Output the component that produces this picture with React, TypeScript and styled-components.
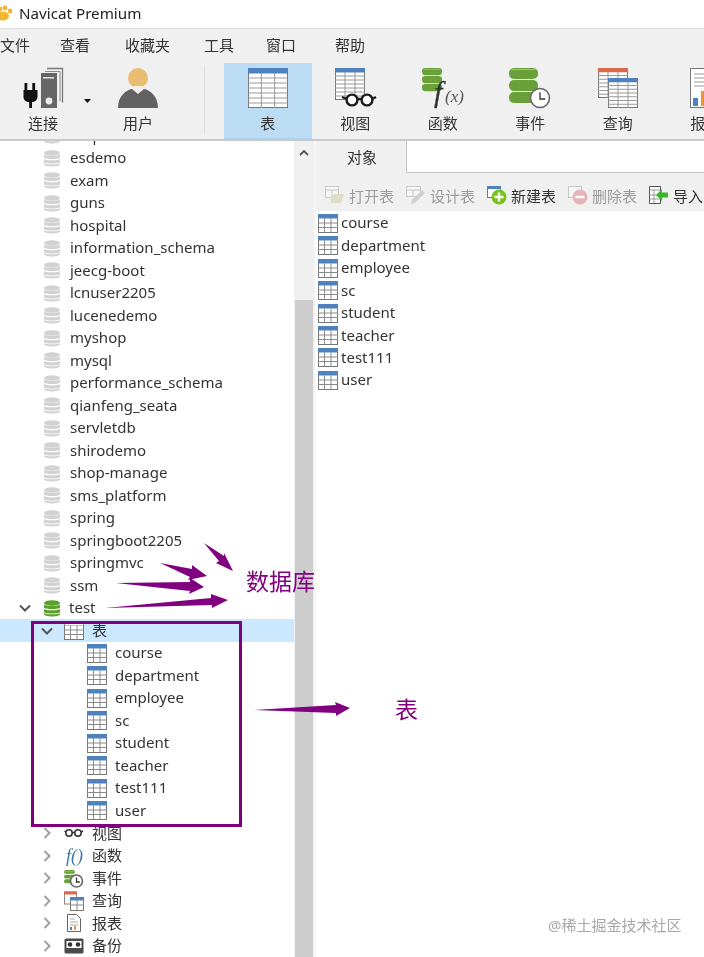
import React from "react";
import styled, { createGlobalStyle } from "styled-components";

const Global = createGlobalStyle`
  html, body { margin: 0; padding: 0; background: #fff; }
  body { font-family: "Noto Sans", "Noto Sans CJK SC", sans-serif; color: #303030; }
  * { box-sizing: border-box; }
`;

const Page = styled.div`
  position: relative;
  width: 704px;
  height: 957px;
  overflow: hidden;
  display: flex;
  flex-direction: column;
  background: #fff;
  filter: blur(0.35px);
`;
const TitleBar = styled.div`
  height: 28px;
  flex: none;
  display: flex;
  align-items: center;
  gap: 7px;
  padding-bottom: 2px;
  background: #fff;
  font-size: 15.2px;
  color: #222;
`;
const MenuBar = styled.div`
  height: 32px;
  flex: none;
  display: flex;
  align-items: center;
  background: #f0f0f0;
  border-top: 1px solid #dcdcdc;
  font-size: 15px;
  color: #333;
`;
const MenuItem = styled.span<{ $gap: number }>`
  margin-left: ${(p) => p.$gap}px;
  white-space: nowrap;
`;
const ToolBar = styled.div`
  height: 81px;
  flex: none;
  display: flex;
  background: #f0f0f0;
  border-bottom: 2px solid #c9c9c9;
  overflow: hidden;
`;
const ToolButton = styled.div<{ $w: number; $active?: boolean }>`
  flex: none;
  width: ${(p) => p.$w}px;
  height: 76px;
  margin-top: 3px;
  padding-top: 4px;
  display: flex;
  flex-direction: column;
  align-items: center;
  background: ${(p) => (p.$active ? "#bcdcf4" : "transparent")};
  box-shadow: ${(p) => (p.$active ? "inset 0 -1px 0 #a8d0ee" : "none")};
`;
const ToolIcon = styled.svg`
  flex: none;
  display: block;
  width: 88px;
  height: 42px;
  overflow: visible;
`;
const ToolLabel = styled.span`
  margin-top: 4px;
  font-size: 15px;
  line-height: 20px;
  color: #333;
  white-space: nowrap;
`;
const Separator = styled.div`
  flex: none;
  width: 1px;
  height: 70px;
  margin: 5px 19px 0 14px;
  background: #dedede;
`;
const Body = styled.div`
  flex: 1;
  min-height: 0;
  display: flex;
`;
const Sidebar = styled.div`
  flex: none;
  width: 294px;
  overflow: hidden;
  background: #fff;
`;
const ClippedRow = styled.div`
  margin-top: -16.75px;
`;
const Row = styled.div<{ $selected?: boolean }>`
  height: 22.5px;
  display: flex;
  align-items: center;
  background: ${(p) => (p.$selected ? "#cce8ff" : "transparent")};
  font-size: 15px;
  color: #333;
  white-space: nowrap;
`;
const ListRow = styled(Row)`
  height: 22.43px;
`;
const Slot = styled.span<{ $w: number }>`
  flex: none;
  width: ${(p) => p.$w}px;
  display: flex;
  align-items: center;
  justify-content: flex-end;
`;
const Glyph = styled.svg`
  flex: none;
  display: block;
`;
const IconSlot = styled.span<{ $left: number }>`
  flex: none;
  display: flex;
  margin-left: ${(p) => p.$left}px;
`;
const RowText = styled.span<{ $left: number }>`
  margin-left: ${(p) => p.$left}px;
  padding-bottom: 2px;
`;
const Scrollbar = styled.div`
  flex: none;
  width: 22px;
  display: flex;
  flex-direction: column;
  background: #f0f0f0;
  border-right: 2px solid #f6f6f6;
`;
const ScrollArrow = styled.svg`
  flex: none;
  display: block;
  margin: 8px 0 0 5px;
`;
const ScrollThumb = styled.div`
  flex: 1;
  margin: 143px 1px 0 1px;
  background: #cdcdcd;
`;
const Main = styled.div`
  flex: 1;
  min-width: 0;
  display: flex;
  flex-direction: column;
  background: #fff;
`;
const TabStrip = styled.div`
  height: 34px;
  flex: none;
  display: flex;
  background: #f0f0f0;
`;
const Tab = styled.div`
  flex: none;
  width: 90px;
  display: flex;
  align-items: center;
  justify-content: center;
  padding: 0 0 3px 2px;
  font-size: 15px;
  color: #333;
`;
const TabFill = styled.div`
  flex: 1;
  height: 32px;
  background: #fff;
  border-left: 1px solid #c4c4c4;
  border-bottom: 1px solid #c4c4c4;
`;
const ActionBar = styled.div`
  height: 36px;
  flex: none;
  display: flex;
  align-items: center;
  padding: 4px 0 0 8px;
  background: #f0f0f0;
  overflow: hidden;
`;
const Action = styled.div<{ $off?: boolean }>`
  flex: none;
  width: 81px;
  display: flex;
  align-items: center;
  gap: 3px;
  font-size: 15px;
  color: ${(p) => (p.$off ? "#9c9c9c" : "#333")};
  white-space: nowrap;
`;
const ObjectList = styled.div`
  flex: 1;
  padding: 1.25px 0 0 2px;
`;
const Overlay = styled.svg`
  position: absolute;
  left: 0;
  top: 0;
  pointer-events: none;
`;
const Note = styled.span<{ $x: number; $y: number }>`
  position: absolute;
  left: ${(p) => p.$x}px;
  top: ${(p) => p.$y}px;
  font-size: 23px;
  line-height: 30px;
  color: #800080;
`;
const SelectBox = styled.div`
  position: absolute;
  left: 30.5px;
  top: 620.5px;
  width: 211px;
  height: 206px;
  border: 3px solid #800080;
`;
const Watermark = styled.span`
  position: absolute;
  left: 548px;
  top: 915px;
  font-size: 15px;
  line-height: 20px;
  color: #a8a8a8;
  white-space: nowrap;
`;

const Paw = () => (
  <Glyph width="12" height="16" viewBox="0 0 12 16">
    <ellipse cx="3" cy="11" rx="6" ry="4.5" fill="#f2b632" />
    <circle cx="10" cy="6" r="2.4" fill="#f2b632" />
    <circle cx="5" cy="3" r="2.4" fill="#f2b632" />
    <circle cx="0" cy="4" r="2.4" fill="#f2b632" />
  </Glyph>
);

const Db = ({ green }: { green?: boolean }) => {
  const c = green ? "#5aa02c" : "#d2d2d2";
  return (
    <Glyph width="16" height="17" viewBox="0 0 16 17">
      <ellipse cx="8" cy="3" rx="8" ry="2.8" fill={c} />
      <path d="M0 4.5c1 1.8 15 1.8 16 0v3c-1 2-15 2-16 0z" fill={c} />
      <path d="M0 9c1 1.8 15 1.8 16 0v3c-1 2-15 2-16 0z" fill={c} />
      <path d="M0 13c1 1.8 15 1.8 16 0v1.2c-1 3-15 3-16 0z" fill={c} />
    </Glyph>
  );
};

const TableIcon = ({ plain }: { plain?: boolean }) => (
  <Glyph width="20" height="19" viewBox="0 0 20 19">
    <rect x="0.5" y="0.5" width="19" height="18" fill="#fff" stroke="#777" />
    <rect x="0" y="0" width="20" height="4.5" fill={plain ? "#8a8a8a" : "#4f81bd"} />
    {plain && <rect x="1" y="1" width="18" height="3" fill="#fff" />}
    <path d="M6.5 4.5v14M13 4.5v14M0 9h20M0 13.5h20" stroke="#8a8a8a" strokeWidth="1" />
  </Glyph>
);

const Chevron = ({ open }: { open?: boolean }) => (
  <Glyph width="12" height="12" viewBox="0 0 12 12">
    <path
      d={open ? "M1 3.5l5 5 5-5" : "M3.5 1l5 5-5 5"}
      fill="none"
      stroke={open ? "#555" : "#a0a0a0"}
      strokeWidth="2"
    />
  </Glyph>
);

const BigTable = ({ x, y, w, h, head }: { x: number; y: number; w: number; h: number; head: string }) => {
  const c1 = x + w / 3;
  const c2 = x + (2 * w) / 3;
  const hh = h / 8;
  const rows = [2, 3, 4, 5, 6, 7].map((i) => y + i * hh);
  return (
    <g>
      <rect x={x + 0.5} y={y + 0.5} width={w - 1} height={h - 1} fill="#fff" stroke="#777" />
      <rect x={x} y={y} width={w} height={hh + 0.5} fill={head} />
      {rows.map((r) => (
        <path key={r} d={`M${x} ${r}h${w}`} stroke="#999" />
      ))}
      <path d={`M${c1} ${y + hh}V${y + h}M${c2} ${y + hh}V${y + h}`} stroke="#999" />
    </g>
  );
};

const GreenDb = ({ x, y, w, h }: { x: number; y: number; w: number; h: number }) => {
  const seg = h / 3;
  const r = Math.min(w / 4, seg / 2.4);
  return (
    <g>
      {[0, 1, 2].map((i) => (
        <rect key={i} x={x} y={y + i * seg} width={w} height={seg - Math.max(0.8, h / 36)} rx={r} fill="#69a03a" />
      ))}
      <rect x={x + r / 2} y={y + 1} width={w - r} height={Math.max(0.6, h / 36)} fill="#9cc47a" />
    </g>
  );
};

const Clock = ({ cx, cy, r }: { cx: number; cy: number; r: number }) => (
  <g>
    <circle cx={cx} cy={cy} r={r} fill="#fff" stroke="#666" strokeWidth="1.6" />
    <path d={`M${cx} ${cy - r * 0.6}V${cy + 1}H${cx + r * 0.55}`} fill="none" stroke="#333" strokeWidth="1.3" />
  </g>
);

const tools: { label: string; icon: React.ReactNode; active?: boolean }[] = [
  { label: "表", active: true, icon: <BigTable x={24} y={1} w={40} h={40} head="#4f81bd" /> },
  {
    label: "视图",
    icon: (
      <>
        <BigTable x={24} y={1} w={30} h={32} head="#4f81bd" />
        <g fill="#fff" stroke="#1c1c1c" strokeWidth="2.4">
          <circle cx="41" cy="33" r="5.4" />
          <circle cx="56" cy="33" r="5.4" />
          <path d="M46 32h5M61 32l4-2M36 32l-5-2" fill="none" />
        </g>
      </>
    ),
  },
  {
    label: "函数",
    icon: (
      <>
        <GreenDb x={23} y={1} w={20} h={24} />
        <text x={35} y={35} fontFamily="Liberation Serif, serif" fontStyle="italic" fontSize="30" fill="#333" stroke="#333" strokeWidth="0.3">f</text>
        <text x={46} y={35} fontFamily="Liberation Serif, serif" fontStyle="italic" fontSize="17" fill="#555">(x)</text>
      </>
    ),
  },
  {
    label: "事件",
    icon: (
      <>
        <GreenDb x={23} y={1} w={29} h={36} />
        <Clock cx={54} cy={31} r={9.5} />
      </>
    ),
  },
  {
    label: "查询",
    icon: (
      <>
        <BigTable x={24} y={1} w={30} h={30} head="#d9694a" />
        <BigTable x={34} y={11} w={30} h={30} head="#4f81bd" />
      </>
    ),
  },
  {
    label: "报表",
    icon: (
      <>
        <rect x="29.5" y="1.5" width="40" height="39" fill="#fff" stroke="#777" />
        <path d="M33 7h20M33 11h20M33 15h20M33 19h12" stroke="#999" />
        <rect x="32" y="31" width="5" height="8" fill="#4f81bd" />
        <rect x="40" y="24" width="5" height="15" fill="#f0923a" />
      </>
    ),
  },
];

const dbs = [
  "esdemo", "exam", "guns", "hospital", "information_schema", "jeecg-boot", "lcnuser2205", "lucenedemo",
  "myshop", "mysql", "performance_schema", "qianfeng_seata", "servletdb", "shirodemo", "shop-manage",
  "sms_platform", "spring", "springboot2205", "springmvc", "ssm",
];
const tables = ["course", "department", "employee", "sc", "student", "teacher", "test111", "user"];

const small = (children: React.ReactNode) => (
  <Glyph width="20" height="20" viewBox="0 0 20 20">
    {children}
  </Glyph>
);

const branches: { label: string; icon: React.ReactNode }[] = [
  {
    label: "视图",
    icon: small(
      <g fill="none" stroke="#333" strokeWidth="1.5">
        <circle cx="5" cy="10" r="3.2" />
        <circle cx="14" cy="10" r="3.2" />
        <path d="M8 9.5h3M1.800 9L0.500 8M17.200 9L19 8" />
      </g>
    ),
  },
  {
    label: "函数",
    icon: small(
      <text x="2" y="16" fontFamily="Liberation Serif, serif" fontStyle="italic" fontSize="18" fill="#3b78b0">
        f()
      </text>
    ),
  },
  {
    label: "事件",
    icon: small(
      <>
        <GreenDb x={0} y={2} w={11} h={14} />
        <Clock cx={12.5} cy={13} r={6} />
      </>
    ),
  },
  {
    label: "查询",
    icon: small(
      <>
        <rect x="0.5" y="1" width="12" height="12" fill="#fff" stroke="#888" />
        <rect x="0" y="0.5" width="13" height="3" fill="#d9694a" />
        <rect x="6.5" y="6.5" width="13" height="13" fill="#fff" stroke="#777" />
        <rect x="6" y="6" width="14" height="3.5" fill="#4f81bd" />
        <path d="M13 9v10M6 14h14" stroke="#888" />
      </>
    ),
  },
  {
    label: "报表",
    icon: small(
      <>
        <path d="M3.500 1.500h9l4 4v13h-13z" fill="#fff" stroke="#666" />
        <path d="M6 6h5M6 9h8M6 12h8" stroke="#aaa" />
        <rect x="6" y="14" width="2" height="3" fill="#4f81bd" />
        <rect x="10" y="13" width="2" height="4" fill="#f0923a" />
      </>
    ),
  },
  {
    label: "备份",
    icon: small(
      <>
        <rect x="0.5" y="2.500" width="19" height="15" rx="1.500" fill="#4a4a4a" />
        <rect x="2.500" y="5" width="15" height="7" fill="#fff" />
        <circle cx="6" cy="8.500" r="2.300" fill="#333" />
        <circle cx="14" cy="8.500" r="2.300" fill="#333" />
      </>
    ),
  },
];

const arrows = [
  "204,543 224,556 224,553 233,571 216,563 219,561",
  "160,563 192,569 192,565 207,576 188,580 190,577",
  "116,583 190,582 190,578 204,587 189,594 190,591",
  "105,608 211,598 211,594 228,600 212,608 212,605",
  "254,710 336,705 335,702 350,708 336,716 336,713",
];

export default function App() {
  return (
    <Page>
      <Global />
      <TitleBar>
        <Paw />
        <span>Navicat Premium</span>
      </TitleBar>
      <MenuBar>
        <MenuItem $gap={0}>文件</MenuItem>
        <MenuItem $gap={30}>查看</MenuItem>
        <MenuItem $gap={35}>收藏夹</MenuItem>
        <MenuItem $gap={34}>工具</MenuItem>
        <MenuItem $gap={32}>窗口</MenuItem>
        <MenuItem $gap={39}>帮助</MenuItem>
      </MenuBar>
      <ToolBar>
        <ToolButton $w={86}>
          <ToolIcon viewBox="0 0 88 42">
            <path d="M25.500 16h2.800v7h5v-7h2.800v7h2.400v7c0 3-3 5-5.500 5v6h-2.800v-6c-3 0-5.700-2-5.700-5v-7h1z" fill="#111" />
            <path d="M48 1.500h15.500v34" fill="none" stroke="#777" strokeWidth="1.300" />
            <path d="M46 4.500h15v30" fill="none" stroke="#888" strokeWidth="1" />
            <rect x="42" y="6" width="16" height="35" fill="#666" />
            <rect x="44" y="10" width="11" height="1.600" fill="#ddd" />
            <circle cx="50" cy="34" r="3.400" fill="#eee" />
            <path d="M85 32h7l-3.500 4z" fill="#111" />
          </ToolIcon>
          <ToolLabel>连接</ToolLabel>
        </ToolButton>
        <ToolButton $w={104}>
          <ToolIcon viewBox="0 0 88 42">
            <circle cx="44" cy="11" r="10" fill="#e8bd72" />
            <path d="M24 41c0-12 8-18 14-19l6 5 6-5c6 1 14 7 14 19z" fill="#626262" />
            <path d="M39 21l5 4 5-4-1-2h-8z" fill="#f3f0ea" />
          </ToolIcon>
          <ToolLabel>用户</ToolLabel>
        </ToolButton>
        <Separator />
        {tools.map((t) => (
          <ToolButton key={t.label} $w={87.5} $active={t.active}>
            <ToolIcon viewBox="0 0 88 42">{t.icon}</ToolIcon>
            <ToolLabel>{t.label}</ToolLabel>
          </ToolButton>
        ))}
      </ToolBar>
      <Body>
        <Sidebar>
          <ClippedRow>
            <Row>
              <Slot $w={44} />
              <Db />
              <RowText $left={10}>emp</RowText>
            </Row>
          </ClippedRow>
          {dbs.map((d) => (
            <Row key={d}>
              <Slot $w={44} />
              <Db />
              <RowText $left={10}>{d}</RowText>
            </Row>
          ))}
          <Row>
            <Slot $w={31}>
              <Chevron open />
            </Slot>
            <IconSlot $left={13}>
              <Db green />
            </IconSlot>
            <RowText $left={9}>test</RowText>
          </Row>
          <Row $selected>
            <Slot $w={53}>
              <Chevron open />
            </Slot>
            <IconSlot $left={11}>
              <TableIcon plain />
            </IconSlot>
            <RowText $left={8}>表</RowText>
          </Row>
          {tables.map((t) => (
            <Row key={t}>
              <Slot $w={87} />
              <TableIcon />
              <RowText $left={8}>{t}</RowText>
            </Row>
          ))}
          {branches.map((b) => (
            <Row key={b.label}>
              <Slot $w={53}>
                <Chevron />
              </Slot>
              <IconSlot $left={11}>{b.icon}</IconSlot>
              <RowText $left={8}>{b.label}</RowText>
            </Row>
          ))}
        </Sidebar>
        <Scrollbar>
          <ScrollArrow width="10" height="8" viewBox="0 0 10 8">
            <path d="M1 6l4-4 4 4" fill="none" stroke="#555" strokeWidth="1.800" />
          </ScrollArrow>
          <ScrollThumb />
        </Scrollbar>
        <Main>
          <TabStrip>
            <Tab>对象</Tab>
            <TabFill />
          </TabStrip>
          <ActionBar>
            <Action $off>
              <Glyph width="22" height="20" viewBox="0 0 22 20">
                <rect x="1.500" y="1.500" width="13" height="11" fill="#f6f6f6" stroke="#c8c8c8" />
                <path d="M1 5h14M8 5v8" stroke="#c8c8c8" />
                <path d="M6 12l5-3h9l-3 9H7z" fill="#dedcc8" />
              </Glyph>
              打开表
            </Action>
            <Action $off>
              <Glyph width="22" height="20" viewBox="0 0 22 20">
                <rect x="1.500" y="1.500" width="14" height="10" fill="#f6f6f6" stroke="#c8c8c8" />
                <path d="M1 5h15M8 5v7" stroke="#c8c8c8" />
                <path d="M17 5l3 3-10 10-4 1 1-4z" fill="#cfcfcf" />
              </Glyph>
              设计表
            </Action>
            <Action>
              <Glyph width="22" height="20" viewBox="0 0 22 20">
                <rect x="1.500" y="1.500" width="13" height="11" fill="#fff" stroke="#777" />
                <rect x="1" y="1" width="14" height="3" fill="#4f81bd" />
                <circle cx="13" cy="12" r="7.500" fill="#7ac21c" />
                <path d="M13 7.500v9M8.500 12h9" stroke="#fff" strokeWidth="2.400" />
              </Glyph>
              新建表
            </Action>
            <Action $off>
              <Glyph width="22" height="20" viewBox="0 0 22 20">
                <rect x="1.500" y="1.500" width="13" height="11" fill="#f6f6f6" stroke="#c8c8c8" />
                <circle cx="13" cy="12" r="7.500" fill="#e4b4b8" />
                <path d="M8.500 12h9" stroke="#fff" strokeWidth="2.400" />
              </Glyph>
              删除表
            </Action>
            <Action>
              <Glyph width="22" height="20" viewBox="0 0 22 20">
                <path d="M1.500 1.500h11v17h-11z" fill="#fff" stroke="#555" />
                <path d="M1.500 5h11M1.500 10h11M1.500 14h11M6 5v13" stroke="#999" />
                <path d="M8 10l6-6v3.500h6v5h-6V16z" fill="#38b62c" />
              </Glyph>
              导入
            </Action>
          </ActionBar>
          <ObjectList>
            {tables.map((t) => (
              <ListRow key={t}>
                <TableIcon />
                <RowText $left={3}>{t}</RowText>
              </ListRow>
            ))}
          </ObjectList>
        </Main>
      </Body>
      <SelectBox />
      <Overlay width="704" height="957" viewBox="0 0 704 957">
        {arrows.map((p) => (
          <polygon key={p} points={p} fill="#800080" />
        ))}
      </Overlay>
      <Note $x={246} $y={566}>数据库</Note>
      <Note $x={395} $y={694}>表</Note>
      <Watermark>@稀土掘金技术社区</Watermark>
    </Page>
  );
}
